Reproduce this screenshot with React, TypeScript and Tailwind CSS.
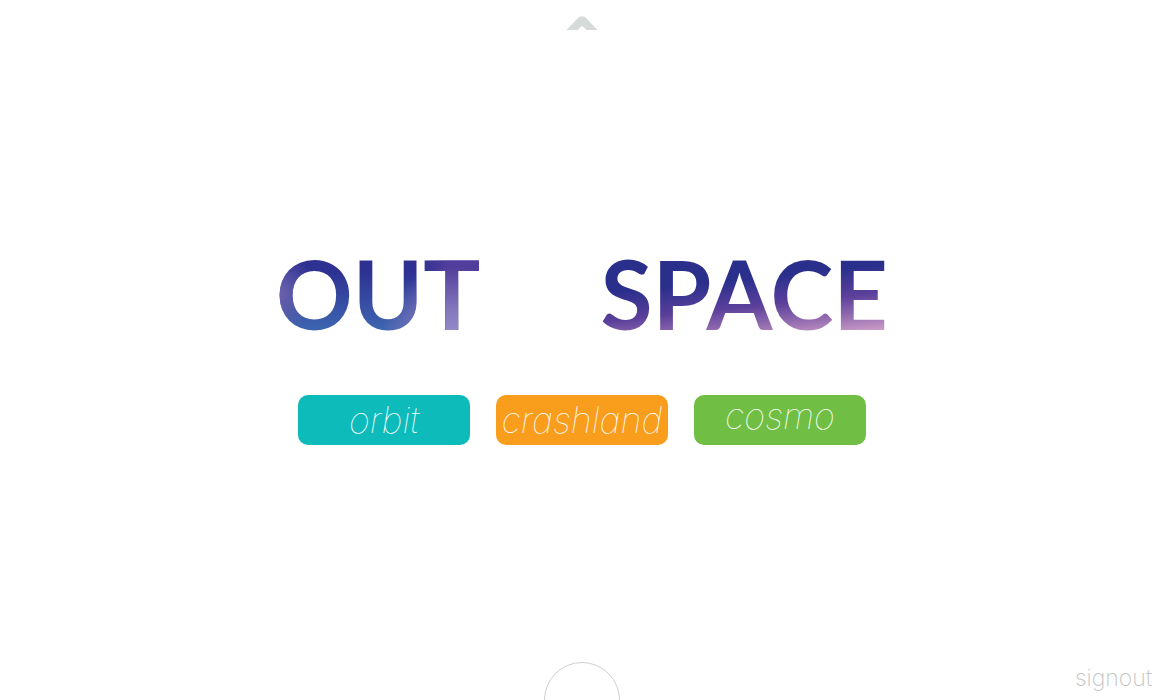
import React from "react";

const destinations = [
  { label: "orbit", style: "bg-[#0ebbbb]" },
  { label: "crashland", style: "bg-[#f99d1c]" },
  { label: "cosmo", style: "bg-[#70bf44] pb-2" },
];

export default function App() {
  return (
    <div className="flex min-h-screen flex-col overflow-hidden bg-white font-['Inter',sans-serif]">
      <header className="flex justify-center pt-4">
        <button type="button" aria-label="Open menu" className="block">
          <svg width="32" height="14" viewBox="0 0 32 14" fill="#d6dad9" aria-hidden="true">
            <path d="M0.5 14 12.4 1.4Q13.4.4 14.6.4H17.4Q18.6.4 19.6 1.4L31.5 14H20.6L16.8 10.4Q16 9.8 15.2 10.4L11.4 14Z" />
          </svg>
        </button>
      </header>

      <main className="flex flex-1 flex-col items-center justify-center gap-[58px] pt-[2px]">
        <h1 className="flex w-full max-w-[612px] justify-between font-['Lato',sans-serif] text-[95px] leading-[88px] font-bold">
          <span className="bg-[radial-gradient(circle_at_0%_50%,#7163ad_0%,transparent_20%),radial-gradient(circle_at_86%_100%,#9890cb_0%,#8478bb_14%,transparent_36%),linear-gradient(90deg,transparent_70%,#513d9b_84%),linear-gradient(#2e3192_25%,#3d64b0_90%)] bg-clip-text text-transparent">
            OUT
          </span>
          <span className="bg-[linear-gradient(174deg,#2a2f8c_38%,#5b409b_62%,#9870b2_80%,#cd9ec9_94%)] bg-clip-text text-transparent">
            SPACE
          </span>
        </h1>
        <nav className="flex gap-[26px]">
          {destinations.map(({ label, style }) => (
            <button
              key={label}
              type="button"
              className={`flex h-[50px] w-[172px] items-center justify-center rounded-[10px] text-[36px] leading-none font-thin text-white italic ${style}`}
            >
              {label}
            </button>
          ))}
        </nav>
      </main>

      <footer className="grid grid-cols-3 items-end">
        <div className="col-start-2 flex h-[38px] justify-center overflow-hidden">
          <button
            type="button"
            aria-label="Launch"
            className="size-[76px] shrink-0 rounded-full border border-[#cfcfcf]"
          />
        </div>
        <a href="#signout" className="justify-self-end pr-3 pb-2 text-[23px] leading-7 font-extralight text-[#c4c6c6]">
          signout
        </a>
      </footer>
    </div>
  );
}
